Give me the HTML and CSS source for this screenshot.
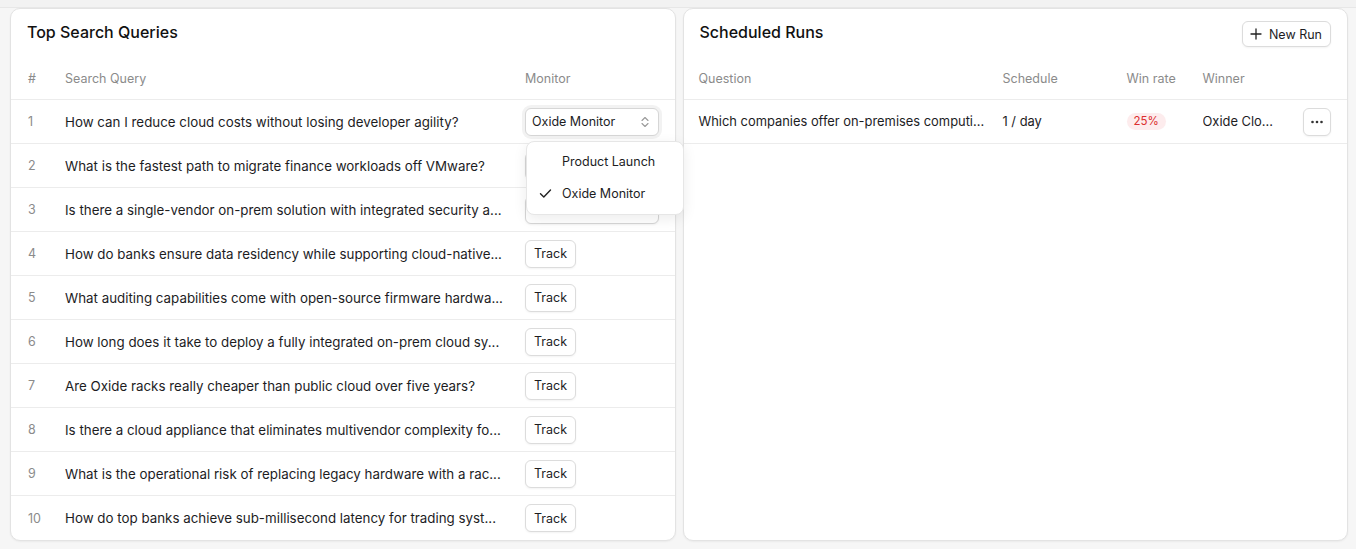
FILE: index.html
```html
<!DOCTYPE html>
<html lang="en">
<head>
    <meta charset="UTF-8">
    <title>Queries and Runs</title>
    <link rel="stylesheet" href="styles.css">
</head>
<body>
    <div class="topbar"></div>

    <div class="panels">
        <div class="card">
            <div class="card-head">
                <h2>Top Search Queries</h2>
            </div>
            <div class="row head-row queries">
                <div class="cell num">#</div>
                <div class="cell">Search Query</div>
                <div class="cell">Monitor</div>
            </div>

            <div class="row queries">
                <div class="cell num">1</div>
                <div class="cell text">How can I reduce cloud costs without losing developer agility?</div>
                <div class="cell monitor">
                    <div class="select open">
                        <span>Oxide Monitor</span>
                        <svg width="10" height="12" viewBox="0 0 10 12"><path d="M2 4.5L5 1.5L8 4.5M2 7.5L5 10.5L8 7.5" fill="none" stroke="#9a9a9a" stroke-width="1.1" stroke-linecap="round" stroke-linejoin="round"/></svg>
                    </div>
                    <div class="menu">
                        <div class="menu-item"><span class="check"></span>Product Launch</div>
                        <div class="menu-item">
                            <span class="check">
                                <svg width="13" height="13" viewBox="0 0 13 13"><path d="M1.5 6.8L4.8 10L11.5 3" fill="none" stroke="#222" stroke-width="1.4" stroke-linecap="round" stroke-linejoin="round"/></svg>
                            </span>Oxide Monitor
                        </div>
                    </div>
                </div>
            </div>
            <div class="row queries">
                <div class="cell num">2</div>
                <div class="cell text">What is the fastest path to migrate finance workloads off VMware?</div>
                <div class="cell monitor">
                    <!-- hidden under the open menu -->
                    <div class="select"></div>
                </div>
            </div>
            <div class="row queries">
                <div class="cell num">3</div>
                <div class="cell text">Is there a single-vendor on-prem solution with integrated security a...</div>
                <div class="cell monitor">
                    <div class="select">
                        <span>Product Launch</span>
                        <svg width="10" height="12" viewBox="0 0 10 12"><path d="M2 4.5L5 1.5L8 4.5M2 7.5L5 10.5L8 7.5" fill="none" stroke="#9a9a9a" stroke-width="1.1" stroke-linecap="round" stroke-linejoin="round"/></svg>
                    </div>
                </div>
            </div>
            <div class="row queries">
                <div class="cell num">4</div>
                <div class="cell text">How do banks ensure data residency while supporting cloud-native...</div>
                <div class="cell monitor"><button class="btn">Track</button></div>
            </div>
            <div class="row queries">
                <div class="cell num">5</div>
                <div class="cell text">What auditing capabilities come with open-source firmware hardwa...</div>
                <div class="cell monitor"><button class="btn">Track</button></div>
            </div>
            <div class="row queries">
                <div class="cell num">6</div>
                <div class="cell text">How long does it take to deploy a fully integrated on-prem cloud sy...</div>
                <div class="cell monitor"><button class="btn">Track</button></div>
            </div>
            <div class="row queries">
                <div class="cell num">7</div>
                <div class="cell text">Are Oxide racks really cheaper than public cloud over five years?</div>
                <div class="cell monitor"><button class="btn">Track</button></div>
            </div>
            <div class="row queries">
                <div class="cell num">8</div>
                <div class="cell text">Is there a cloud appliance that eliminates multivendor complexity fo...</div>
                <div class="cell monitor"><button class="btn">Track</button></div>
            </div>
            <div class="row queries">
                <div class="cell num">9</div>
                <div class="cell text">What is the operational risk of replacing legacy hardware with a rac...</div>
                <div class="cell monitor"><button class="btn">Track</button></div>
            </div>
            <div class="row queries last">
                <div class="cell num">10</div>
                <div class="cell text">How do top banks achieve sub-millisecond latency for trading syst...</div>
                <div class="cell monitor"><button class="btn">Track</button></div>
            </div>
        </div>

        <div class="card">
            <div class="card-head">
                <h2>Scheduled Runs</h2>
                <button class="btn new-run">
                    <svg width="12" height="12" viewBox="0 0 12 12"><path d="M6 1v10M1 6h10" stroke="#222" stroke-width="1.3" stroke-linecap="round"/></svg>
                    New Run
                </button>
            </div>
            <div class="row head-row runs">
                <div class="cell first">Question</div>
                <div class="cell">Schedule</div>
                <div class="cell">Win rate</div>
                <div class="cell">Winner</div>
                <div class="cell"></div>
            </div>
            <div class="row runs body-row">
                <div class="cell first text">Which companies offer on-premises computi...</div>
                <div class="cell">1 / day</div>
                <div class="cell"><span class="badge">25%</span></div>
                <div class="cell text">Oxide Clo...</div>
                <div class="cell actions">
                    <button class="btn dots">
                        <svg width="14" height="4" viewBox="0 0 14 4"><circle cx="2.5" cy="2" r="1.3" fill="#333"/><circle cx="7" cy="2" r="1.3" fill="#333"/><circle cx="11.5" cy="2" r="1.3" fill="#333"/></svg>
                    </button>
                </div>
            </div>
        </div>
    </div>
</body>
</html>
```

FILE: styles.css
```css
* {
    box-sizing: border-box;
}
body {
    margin: 0;
    font-family: Inter, "Noto Sans", sans-serif;
    font-size: 13.35px;
    color: #1d1d1f;
    background: #f6f6f6;
    height: 549px;
    overflow: hidden;
}
.topbar {
    height: 8px;
    background: #f2f2f2;
    border-bottom: 1px solid #e7e7e7;
}
.panels {
    display: grid;
    grid-template-columns: 1fr 1fr;
    gap: 7px;
    padding: 0 8px 8px 10px;
    height: 541px;
}
.card {
    background: #fff;
    border: 1px solid #e3e3e3;
    border-radius: 10px;
    box-shadow: 0 1px 2px rgba(0, 0, 0, 0.05);
    position: relative;
}
.card-head {
    height: 48px;
    padding: 12px 16px 0 16px;
    display: flex;
    justify-content: space-between;
    align-items: flex-start;
}
.card-head h2 {
    margin: 0;
    font-size: 16px;
    line-height: 22px;
    font-weight: 500;
    color: #111;
}
.row {
    display: grid;
    height: 44px;
    align-items: center;
    border-bottom: 1px solid #ececec;
}
.row.last {
    border-bottom: none;
}
.head-row {
    height: 43px;
    color: #8b8b8b;
    font-size: 12.5px;
}
.body-row {
    font-size: 12.9px;
}
.queries {
    grid-template-columns: 54px 460px 1fr;
}
.runs {
    grid-template-columns: 319px 124px 76px 100px 1fr;
}
.cell {
    min-width: 0;
}
.cell.num {
    padding-left: 17px;
    color: #8b8b8b;
    font-size: 12.5px;
}
.cell.first {
    padding-left: 15px;
}
.cell.text {
    white-space: nowrap;
    overflow: hidden;
    text-overflow: ellipsis;
    padding-right: 8px;
}
.monitor {
    position: relative;
}
.select {
    width: 134px;
    height: 28px;
    border: 1px solid #d6d6d6;
    border-radius: 6px;
    padding: 0 8px 0 6px;
    display: flex;
    align-items: center;
    justify-content: space-between;
    font-size: 12.5px;
    background: #fff;
    box-shadow: 0 1px 2px rgba(0, 0, 0, 0.05);
}
.select.open {
    box-shadow: 0 0 0 3px rgba(0, 0, 0, 0.05);
}
.menu {
    position: absolute;
    top: 33px;
    left: 1px;
    width: 158px;
    padding: 4px;
    background: #fff;
    border: 1px solid #e6e6e6;
    border-radius: 8px;
    box-shadow: 0 4px 14px rgba(0, 0, 0, 0.08);
    z-index: 5;
}
.menu-item {
    height: 32px;
    display: flex;
    align-items: center;
    font-size: 12.5px;
    color: #1d1d1f;
}
.check {
    width: 31px;
    padding-left: 8px;
    display: flex;
    align-items: center;
}
.btn {
    font-family: inherit;
    font-size: 12.5px;
    color: #1d1d1f;
    background: #fff;
    border: 1px solid #dcdcdc;
    border-radius: 6px;
    height: 28px;
    padding: 0 8px;
    box-shadow: 0 1px 2px rgba(0, 0, 0, 0.05);
    cursor: pointer;
}
.new-run {
    height: 26px;
    display: flex;
    align-items: center;
    gap: 7px;
    padding: 0 8px 0 7px;
}
.badge {
    display: inline-block;
    height: 17px;
    line-height: 17px;
    padding: 0 7px;
    border-radius: 9px;
    background: #fdeced;
    color: #dc2f2f;
    font-size: 11.5px;
}
.actions {
    display: flex;
    justify-content: flex-start;
}
.dots {
    width: 28px;
    padding: 0;
    display: flex;
    align-items: center;
    justify-content: center;
}
```
